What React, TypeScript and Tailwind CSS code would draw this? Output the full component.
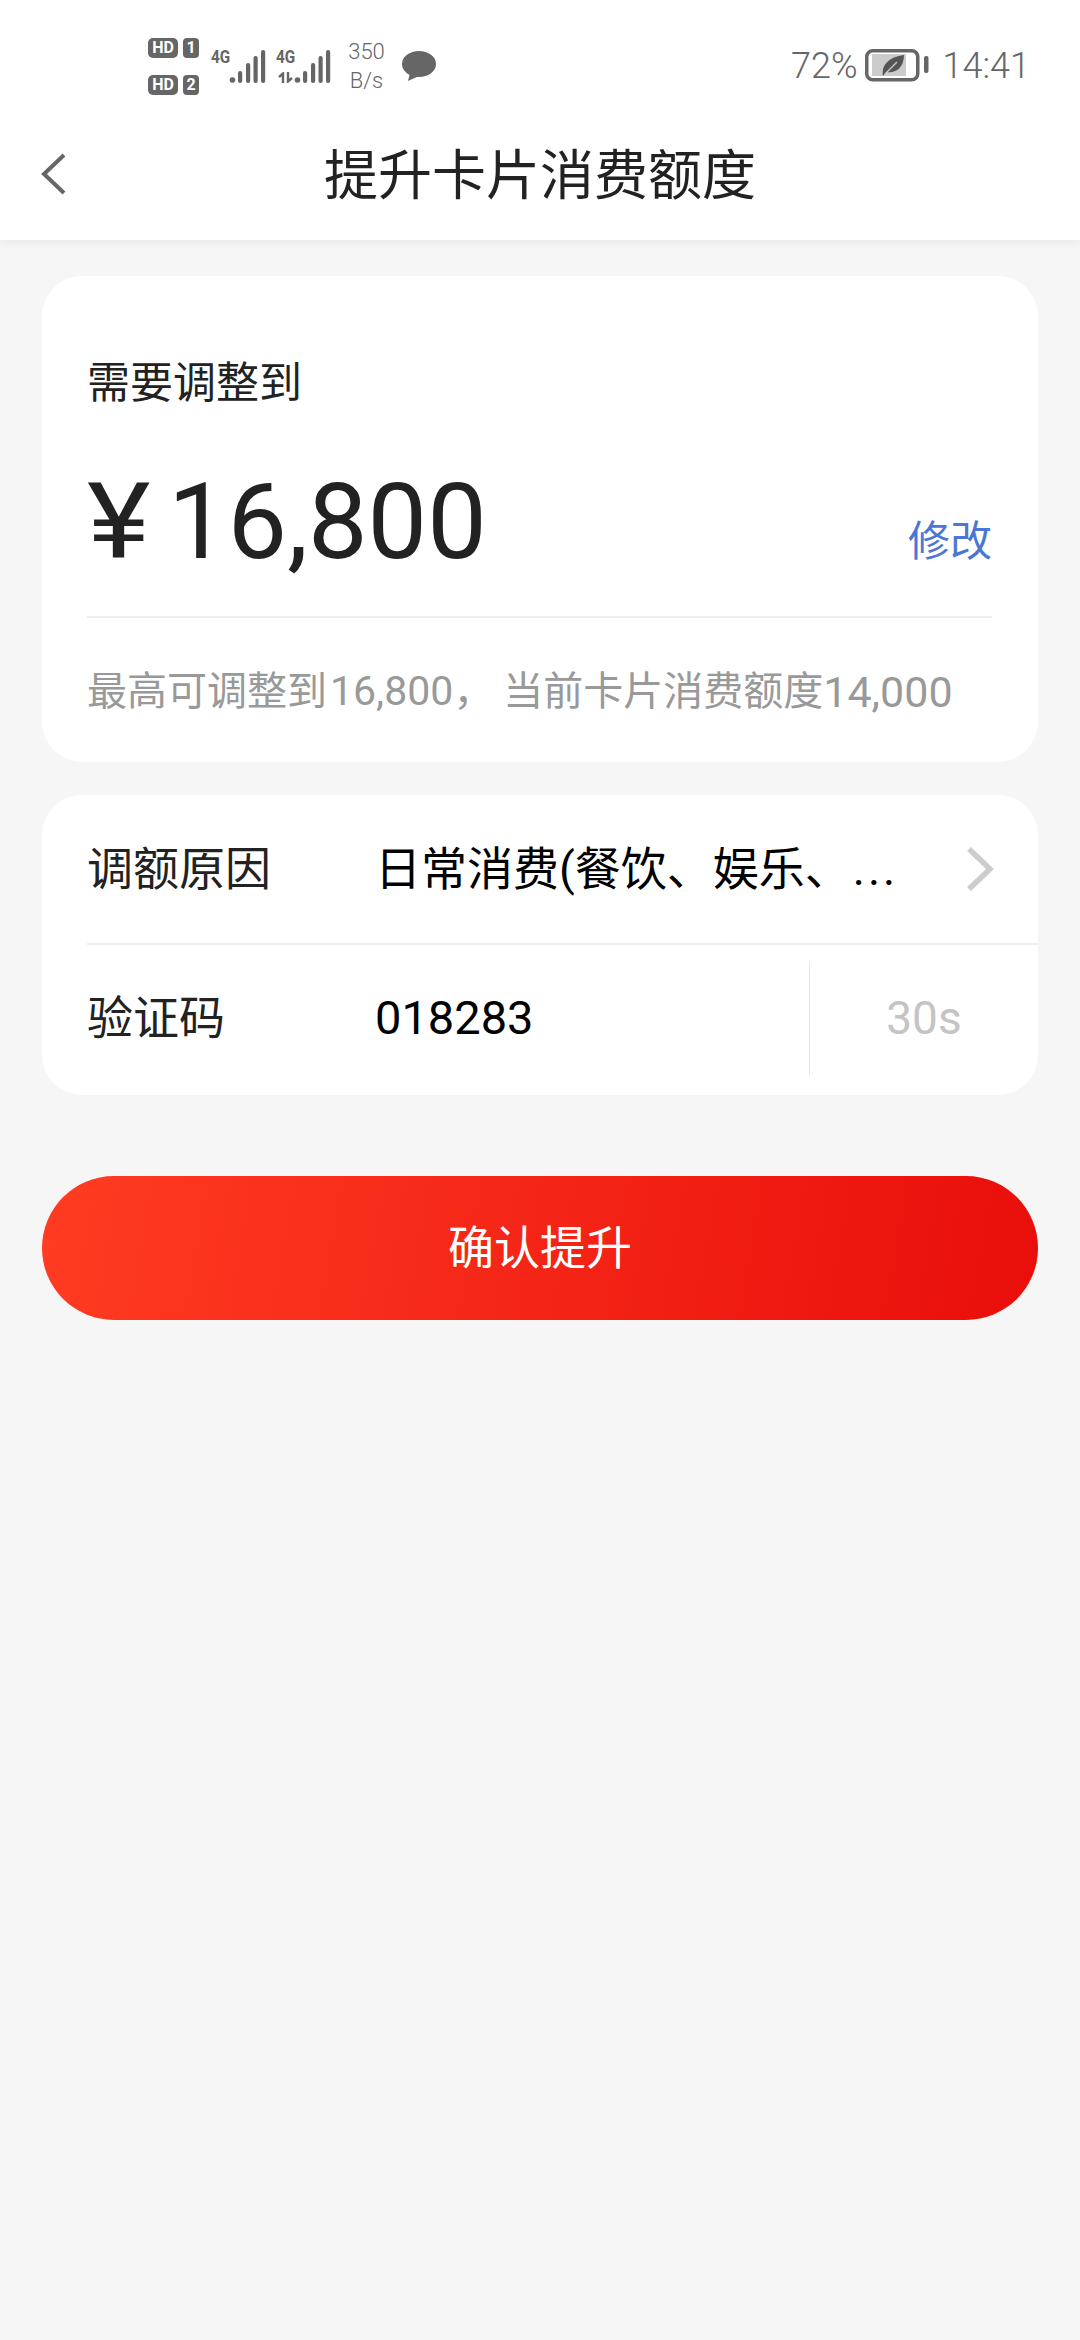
function SignalBars() {
  const bars = [
    { x: 9, h: 12 },
    { x: 17, h: 20 },
    { x: 24.5, h: 27 },
    { x: 32, h: 33 },
  ];
  return (
    <svg width="37" height="33" viewBox="0 0 37 33" fill="#666">
      <circle cx="3.5" cy="30" r="2.8" />
      {bars.map((b) => (
        <rect key={b.x} x={b.x} y={33 - b.h} width="4.2" height={b.h} rx="2" />
      ))}
    </svg>
  );
}

function SimBadge({ n }: { n: string }) {
  return (
    <div className="flex items-center gap-[5px]">
      <span className="flex h-[20px] w-[30px] items-center justify-center rounded-[5px] bg-[#666] text-[16px] leading-none font-bold text-white">HD</span>
      <span className="flex h-[20px] w-[16px] items-center justify-center rounded-[4px] bg-[#666] text-[16px] leading-none font-bold text-white">{n}</span>
    </div>
  );
}

function NetLabel() {
  return (
    <span className="mb-[19px] inline-block w-[18px] origin-left scale-x-[0.85] text-[18px] leading-[14px] font-bold">4G</span>
  );
}

function StatusBar() {
  return (
    <div className="flex h-[132px] items-center justify-between pr-[50px] pl-[148px] text-[#666]">
      <div className="flex items-center">
        <div className="flex flex-col gap-[17px]">
          <SimBadge n="1" />
          <SimBadge n="2" />
        </div>
        <div className="ml-[12px] flex items-end">
          <NetLabel />
          <SignalBars />
        </div>
        <div className="relative ml-[10px] flex items-end">
          <NetLabel />
          <svg className="absolute bottom-0 left-[2px]" width="15" height="11" viewBox="0 0 15 11" fill="none" stroke="#666" strokeWidth="2.4">
            <path d="M5 11 V1.5 L1 5" />
            <path d="M10 0 V9.5 L14 6" />
          </svg>
          <SignalBars />
        </div>
        <div className="ml-[16px] flex w-[39px] flex-col items-center text-[22px] leading-[29px] font-light">
          <span>350</span>
          <span>B/s</span>
        </div>
        <svg className="ml-[16px]" width="34" height="30" viewBox="0 0 34 30" fill="#666">
          <ellipse cx="17" cy="13" rx="17" ry="13" />
          <path d="M8 22 L6 30 L17 25 Z" />
        </svg>
      </div>
      <div className="flex items-center">
        <span className="text-[36px] leading-none font-light">72%</span>
        <svg className="ml-[7px]" width="64" height="34" viewBox="0 0 64 34">
          <rect x="1.75" y="1.75" width="51" height="29" rx="6" fill="none" stroke="#666" strokeWidth="3.5" />
          <rect x="7" y="5" width="34" height="22" fill="#ccc" />
          <path d="M18 27 C16 16 24 8 39 6 C39 18 31 25 21 23 L18 27 Z" fill="#555" />
          <path d="M21 24 L32 13" stroke="#ccc" strokeWidth="1.2" />
          <rect x="59" y="7" width="4.5" height="17" rx="2" fill="#666" />
        </svg>
        <span className="ml-[14px] text-[36px] leading-none font-light">14:41</span>
      </div>
    </div>
  );
}

export default function App() {
  return (
    <div className='flex min-h-[2340px] w-[1080px] flex-col bg-[#f6f6f6] font-["Roboto","Noto_Sans_CJK_SC",sans-serif]'>
      <div className="bg-white shadow-[0_2px_10px_rgba(0,0,0,0.06)]">
        <StatusBar />
        <div className="relative flex h-[108px] items-center justify-center pb-[18px]">
          <svg className="absolute top-[20px] left-[40px]" width="27" height="44" viewBox="0 0 27 44" fill="none" stroke="#666" strokeWidth="4">
            <path d="M24 3 L4 22 L24 41" />
          </svg>
          <h1 className="text-[54px] leading-none font-normal text-[#222]">提升卡片消费额度</h1>
        </div>
      </div>

      <div className="mx-[42px] mt-[36px] rounded-[40px] bg-white pt-[86px] pr-[46px] pl-[45px]">
        <div className="text-[43px] leading-none text-[#222]">需要调整到</div>
        <div className="mt-[72px] flex items-end justify-between border-b-2 border-[#eeeeee] pb-[49px]">
          <div className="flex items-center text-[106px] leading-[90px] text-[#222]">
            <span className="inline-block w-[81px] origin-left scale-x-[1.14]">¥</span>
            <span>16,800</span>
          </div>
          <span className="mb-[4px] text-[42px] leading-none text-[#4a76d6]">修改</span>
        </div>
        <div className="flex h-[144px] items-center pt-[4px] text-[40px] text-[#999]">
          <span>最高可调整到</span>
          <span className="ml-[3px] text-[41px]">16,800，</span>
          <span className="ml-[9px]">当前卡片消费额度</span>
          <span className="text-[43px]">14,000</span>
        </div>
      </div>

      <div className="mx-[42px] mt-[33px] rounded-[40px] bg-white pl-[45px]">
        <div className="flex h-[150px] items-center border-b-2 border-[#eeeeee]">
          <span className="w-[288px] text-[46px] text-[#222]">调额原因</span>
          <span className="flex-1 text-[46px] text-black">
            日常消费(餐饮、娱乐、<span className="ml-[2px] tracking-[3px]">...</span>
          </span>
          <svg className="mr-[44px]" width="28" height="46" viewBox="0 0 28 46" fill="none" stroke="#ccc" strokeWidth="5.5">
            <path d="M3 3 L24 23 L3 43" />
          </svg>
        </div>
        <div className="flex h-[150px] items-center pb-[4px]">
          <span className="w-[288px] text-[46px] text-[#222]">验证码</span>
          <span className="flex-1 text-[47px] text-black">018283</span>
          <div className="flex h-[113px] w-[229px] items-center justify-center border-l border-[#e5e5e5] text-[46px] text-[#c4c4c4]">30s</div>
        </div>
      </div>

      <button className="mx-[42px] mt-[81px] h-[144px] rounded-full bg-[linear-gradient(100deg,#ff3c22,#e90e0b)] text-[46px] text-white">确认提升</button>
    </div>
  );
}
